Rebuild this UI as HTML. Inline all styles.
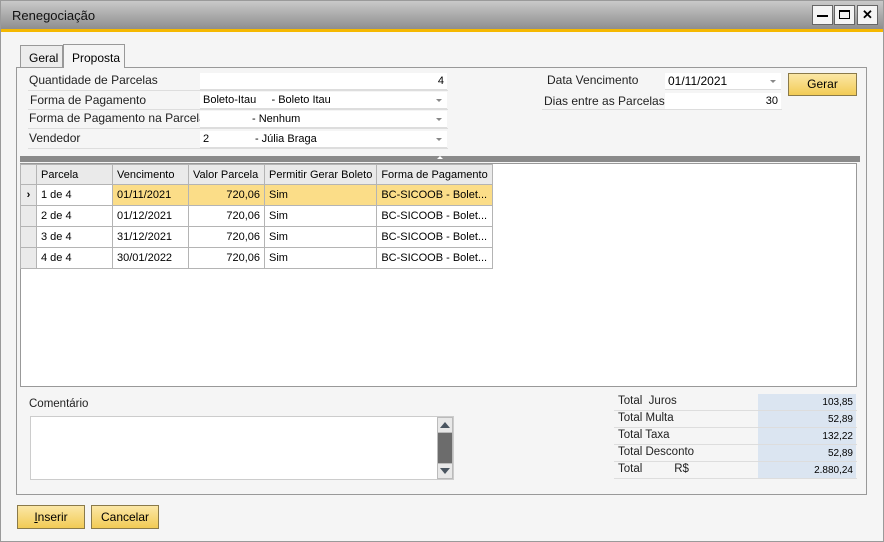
<!DOCTYPE html>
<html><head><meta charset="utf-8"><style>
*{box-sizing:border-box;margin:0;padding:0}
body{width:884px;height:542px;overflow:hidden;background:#f5f5f5;font-family:"Liberation Sans",sans-serif;font-size:11px;color:#000;position:relative}
.a{position:absolute}
.win{left:0;top:0;width:884px;height:542px;border:1px solid #9a9a9a;background:#f5f5f5}
.title{left:1px;top:1px;width:882px;height:28px;background:linear-gradient(#c9c9c9,#8e8e8e)}
.orange{left:1px;top:29px;width:882px;height:3px;background:#f5b800}
.tb{top:5px;width:21px;height:20px;background:#f4f4f4;border:1px solid #666;font-weight:bold;text-align:center;font-size:13px;line-height:17px}
.lbl{font-size:12px;color:#222}
.fld{background:#fff;border-bottom:1px solid #ddd;height:17px;line-height:17px;padding:0 3px}
.dd::after{content:"";position:absolute;right:5px;top:7px;border-left:3px solid transparent;border-right:3px solid transparent;border-top:3px solid #888}
.btn{background:linear-gradient(#fbe7a6,#f2cb55);border:1px solid #8a7a4a;text-align:center;font-size:12px}
.line{height:1px;background:#ddd}
table{border-collapse:collapse;position:absolute;left:20px;top:164px;background:#fff}
td{border:1px solid #b4b4b4;height:21px;padding:0 4px;font-size:11px;white-space:nowrap}
tr.h td{background:#eaeaea;height:20px}
td.rh{background:#eaeaea;width:16px;padding:0}
tr.s td{background:#fbdd88}
.r{text-align:right}
.tl{font-size:11.5px;color:#222}
.tv{background:#dbe5f1;text-align:right;font-size:10px;padding-right:3px;line-height:17px;height:16px;width:98px;left:758px}
</style></head><body>
<div class="a win"></div>
<div class="a title"></div>
<div class="a" style="left:12px;top:8px;font-size:13px;color:#111">Renegociação</div>
<div class="a orange"></div>
<div class="a tb" style="left:812px"><div style="width:11px;height:2px;background:#000;margin:9px auto 0"></div></div>
<div class="a tb" style="left:834px"><div style="width:11px;height:9px;border:1.5px solid #000;border-top-width:2px;margin:4px auto 0"></div></div>
<div class="a tb" style="left:857px">✕</div>

<!-- tabs -->
<div class="a" style="left:20px;top:45px;width:43px;height:23px;border:1px solid #999;border-bottom:none;background:#ececec;font-size:12px;padding:5px 0 0 8px">Geral</div>
<div class="a" style="left:63px;top:44px;width:62px;height:24px;border:1px solid #999;border-bottom:none;background:#f5f5f5;font-size:12px;padding:6px 0 0 8px;z-index:2">Proposta</div>
<div class="a" style="left:16px;top:67px;width:851px;height:428px;border:1px solid #999"></div>

<!-- left fields -->
<div class="a lbl" style="left:29px;top:73px">Quantidade de Parcelas</div>
<div class="a fld" style="left:200px;top:73px;width:247px;text-align:right">4</div>
<div class="a lbl" style="left:30px;top:93px">Forma de Pagamento</div>
<div class="a fld dd" style="left:200px;top:92px;width:247px">Boleto-Itau&nbsp;&nbsp;&nbsp;&nbsp;&nbsp;- Boleto Itau</div>
<div class="a lbl" style="left:29px;top:111px">Forma de Pagamento na Parcela</div>
<div class="a fld dd" style="left:200px;top:111px;width:247px;padding-left:52px">- Nenhum</div>
<div class="a lbl" style="left:29px;top:131px">Vendedor</div>
<div class="a fld dd" style="left:200px;top:131px;width:247px">2&nbsp;&nbsp;&nbsp;&nbsp;&nbsp;&nbsp;&nbsp;&nbsp;&nbsp;&nbsp;&nbsp;&nbsp;&nbsp;&nbsp;&nbsp;- Júlia Braga</div>
<div class="a line" style="left:28px;top:90px;width:420px"></div>
<div class="a line" style="left:28px;top:109px;width:420px"></div>
<div class="a line" style="left:28px;top:128px;width:420px"></div>
<div class="a line" style="left:28px;top:148px;width:420px"></div>

<!-- right fields -->
<div class="a lbl" style="left:547px;top:73px">Data Vencimento</div>
<div class="a fld dd" style="left:665px;top:73px;width:116px;font-size:12px">01/11/2021</div>
<div class="a lbl" style="left:544px;top:94px">Dias entre as Parcelas</div>
<div class="a fld" style="left:665px;top:93px;width:116px;text-align:right">30</div>
<div class="a line" style="left:542px;top:109px;width:240px"></div>
<div class="a btn" style="left:788px;top:73px;width:69px;height:23px;line-height:21px">Gerar</div>

<!-- grid -->
<div class="a" style="left:20px;top:156px;width:840px;height:6px;background:#8a8a8a"></div>
<div class="a" style="left:437px;top:156px;width:0;height:0;border-left:3px solid transparent;border-right:3px solid transparent;border-bottom:3px solid #fff"></div>
<div class="a" style="left:20px;top:163px;width:837px;height:224px;background:#fff;border:1px solid #999"></div>
<table>
<tr class="h"><td class="rh"></td><td style="width:76px">Parcela</td><td style="width:76px">Vencimento</td><td style="width:76px">Valor Parcela</td><td style="width:111px">Permitir Gerar Boleto</td><td style="width:115px">Forma de Pagamento</td></tr>
<tr class="s"><td class="rh" style="background:#eaeaea;text-align:center;font-weight:bold">›</td><td style="background:#fff">1 de 4</td><td>01/11/2021</td><td class="r">720,06</td><td>Sim</td><td>BC-SICOOB - Bolet...</td></tr>
<tr><td class="rh"></td><td>2 de 4</td><td>01/12/2021</td><td class="r">720,06</td><td>Sim</td><td>BC-SICOOB - Bolet...</td></tr>
<tr><td class="rh"></td><td>3 de 4</td><td>31/12/2021</td><td class="r">720,06</td><td>Sim</td><td>BC-SICOOB - Bolet...</td></tr>
<tr><td class="rh"></td><td>4 de 4</td><td>30/01/2022</td><td class="r">720,06</td><td>Sim</td><td>BC-SICOOB - Bolet...</td></tr>
</table>

<!-- comment -->
<div class="a lbl" style="left:29px;top:398px;font-size:11.5px">Comentário</div>
<div class="a" style="left:30px;top:416px;width:424px;height:64px;background:#fff;border:1px solid #ccc"></div>
<div class="a" style="left:437px;top:417px;width:16px;height:62px;background:#6c6c6c;border:1px solid #bbb"></div>
<div class="a" style="left:437px;top:417px;width:16px;height:16px;background:#e8e8e8;border:1px solid #bbb"><div style="margin:4px auto 0;width:0;border-left:5px solid transparent;border-right:5px solid transparent;border-bottom:6px solid #4a5560"></div></div>
<div class="a" style="left:437px;top:463px;width:16px;height:16px;background:#e8e8e8;border:1px solid #bbb"><div style="margin:4px auto 0;width:0;border-left:5px solid transparent;border-right:5px solid transparent;border-top:6px solid #4a5560"></div></div>

<!-- totals -->
<div class="a tl" style="left:618px;top:395px">Total&nbsp; Juros</div><div class="a tv" style="top:394px">103,85</div>
<div class="a tl" style="left:618px;top:412px">Total Multa</div><div class="a tv" style="top:411px">52,89</div>
<div class="a tl" style="left:618px;top:429px">Total Taxa</div><div class="a tv" style="top:428px">132,22</div>
<div class="a tl" style="left:618px;top:446px">Total Desconto</div><div class="a tv" style="top:445px">52,89</div>
<div class="a tl" style="left:618px;top:463px">Total&nbsp;&nbsp;&nbsp;&nbsp;&nbsp;&nbsp;&nbsp;&nbsp;&nbsp;&nbsp;R$</div><div class="a tv" style="top:462px">2.880,24</div>
<div class="a line" style="left:614px;top:410px;width:243px"></div>
<div class="a line" style="left:614px;top:427px;width:243px"></div>
<div class="a line" style="left:614px;top:444px;width:243px"></div>
<div class="a line" style="left:614px;top:461px;width:243px"></div>
<div class="a line" style="left:614px;top:478px;width:243px"></div>

<!-- buttons -->
<div class="a btn" style="left:17px;top:505px;width:68px;height:24px;line-height:22px"><u>I</u>nserir</div>
<div class="a btn" style="left:91px;top:505px;width:68px;height:24px;line-height:22px">Cancelar</div>
</body></html>
